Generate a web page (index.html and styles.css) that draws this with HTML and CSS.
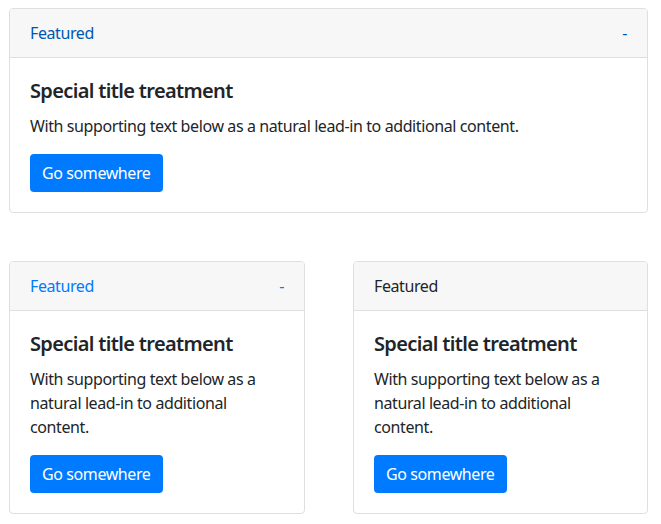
FILE: index.html
```html
<!DOCTYPE html>
<html>
<head>
<meta charset="utf-8">
<link rel="stylesheet" href="styles.css">
</head>
<body>
<div class="page">
  <div class="card">
    <div class="card-header">
      <span class="hdr-link dark">Featured</span>
      <span class="hdr-link dark">-</span>
    </div>
    <div class="card-body">
      <h5 class="card-title">Special title treatment</h5>
      <p class="card-text">With supporting text below as a natural lead-in to additional content.</p>
      <a class="btn">Go somewhere</a>
    </div>
  </div>
  <div class="row">
    <div class="card">
      <div class="card-header">
        <span class="hdr-link">Featured</span>
        <span class="hdr-link">-</span>
      </div>
      <div class="card-body">
        <h5 class="card-title">Special title treatment</h5>
        <p class="card-text">With supporting text below as a natural lead-in to additional content.</p>
        <a class="btn">Go somewhere</a>
      </div>
    </div>
    <div class="card">
      <div class="card-header">
        <span class="hdr-plain">Featured</span>
      </div>
      <div class="card-body">
        <h5 class="card-title">Special title treatment</h5>
        <p class="card-text">With supporting text below as a natural lead-in to additional content.</p>
        <a class="btn">Go somewhere</a>
      </div>
    </div>
  </div>
</div>
</body>
</html>
```
FILE: styles.css
```css
html, body {
  margin: 0;
  padding: 0;
  background: #fff;
}
body {
  font-family: "Noto Sans", "Open Sans", sans-serif;
  font-size: 16px;
  line-height: 24px;
  letter-spacing: -0.4px;
  color: #212529;
}
.page {
  padding: 8px 13px 8px 9px;
  display: flex;
  flex-direction: column;
  gap: 48px;
}
.row {
  display: grid;
  grid-template-columns: 296px 295px;
  justify-content: space-between;
}
.card {
  border: 1px solid #dfdfdf;
  border-radius: 4px;
  background: #fff;
  overflow: hidden;
}
.card-header {
  background: #f7f7f7;
  border-bottom: 1px solid #dfdfdf;
  padding: 12px 20px;
  height: 24px;
  display: flex;
  justify-content: space-between;
}
.hdr-link { color: #007bff; }
.hdr-link.dark { color: #0056b3; }
.hdr-plain { color: #212529; }
.card-body {
  padding: 20px;
}
.card-title {
  margin: 0 0 12px;
  padding-top: 1px;
  height: 23px;
  font-size: 20px;
  line-height: 24px;
  font-weight: 600;
  letter-spacing: -0.65px;
}
.card-text {
  margin: 0 0 16px;
}
.btn {
  display: inline-block;
  background: #007bff;
  color: #fff;
  padding: 7px 12px;
  line-height: 24px;
  border-radius: 4px;
  height: 24px;
}
```
